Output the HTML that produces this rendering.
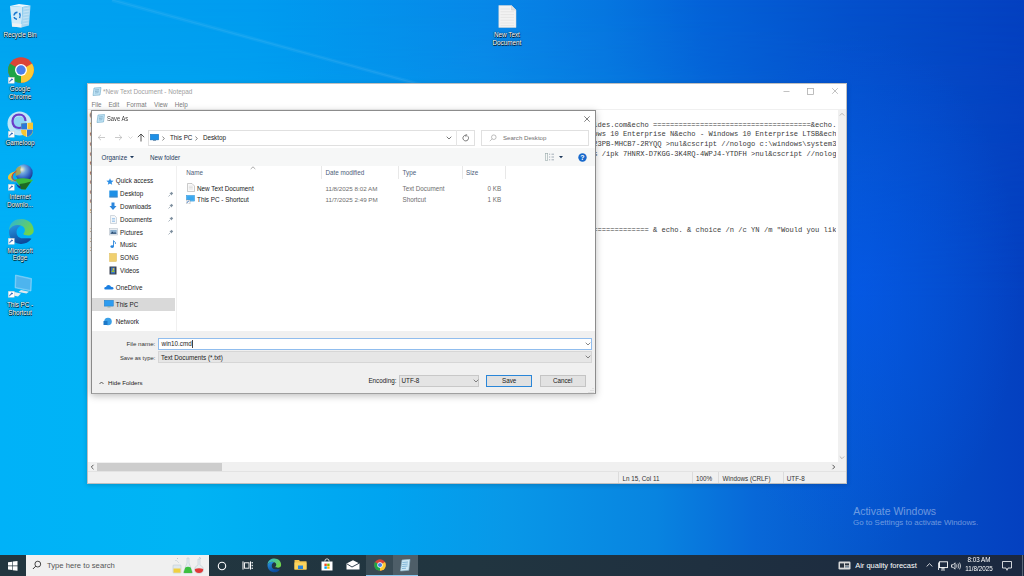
<!DOCTYPE html>
<html><head><meta charset="utf-8"><style>
*{margin:0;padding:0;box-sizing:border-box}
html,body{width:1024px;height:576px;overflow:hidden}
body{position:relative;font-family:"Liberation Sans",sans-serif;background:#0a80e0}
.a{position:absolute}
.t{position:absolute;white-space:nowrap;line-height:10px}
#bgTop{left:0;top:0;width:1024px;height:576px;background:linear-gradient(90deg,#00a4f0 0px,#009cf0 255px,#0888e8 485px,#0676e0 605px,#0462d8 705px,#0450cc 850px,#0440c0 1024px)}
#bgBot{left:0;top:0;width:1024px;height:576px;background:linear-gradient(90deg,#00b2f8 0px,#00b4f4 185px,#00a4f0 385px,#0898e8 505px,#0884e0 655px,#0868d8 755px,#0450c8 905px,#0440c0 1024px);-webkit-mask-image:linear-gradient(180deg,rgba(0,0,0,0) 0px,rgba(0,0,0,0.12) 65px,rgba(0,0,0,0.7) 155px,#000 300px);mask-image:linear-gradient(180deg,rgba(0,0,0,0) 0px,rgba(0,0,0,0.12) 65px,rgba(0,0,0,0.7) 155px,#000 300px)}
.dl{color:#fff;font-size:6.3px;text-align:center;width:44px;line-height:7.7px;text-shadow:0.6px 0.6px 0.4px rgba(0,0,0,0.9),-0.4px 0 0.4px rgba(0,0,0,0.5),0 0 1.5px rgba(0,0,0,0.8)}
.mono{font-family:"Liberation Mono",monospace;font-size:7.12px;line-height:9.54px;color:#3a3a3a;white-space:pre}
</style></head><body>
<div id="bgTop" class="a"></div><div id="bgBot" class="a"></div>
<div class="a" style="left:0px;top:0px;width:1024px;height:576px;background:radial-gradient(ellipse 160px 260px at 860px 290px, rgba(4,88,240,0.6), rgba(4,88,240,0))"></div>
<svg class="a" style="left:0px;top:0px" width="1024" height="200" viewBox="0 0 1024 200"><path d="M112 0 L520 112" stroke="#fff" stroke-opacity="0.05" stroke-width="4"/><path d="M112 0 L520 112" stroke="#fff" stroke-opacity="0.06" stroke-width="1.2"/></svg>
<div class="t dl" style="left:-2px;top:31px">Recycle Bin</div>
<div class="t dl" style="left:-2px;top:85px">Google<br>Chrome</div>
<div class="t dl" style="left:-2px;top:139px">Gameloop</div>
<div class="t dl" style="left:-2px;top:193px">Internet<br>Downlo...</div>
<div class="t dl" style="left:-2px;top:246.6px">Microsoft<br>Edge</div>
<div class="t dl" style="left:-2px;top:301px">This PC -<br>Shortcut</div>
<div class="t dl" style="left:484.9px;top:31.2px">New Text<br>Document</div>
<svg class="a" style="left:9px;top:3px" width="23" height="26" viewBox="0 0 23 26"><path d="M1 3 L13.5 4 L12.5 24.5 L3 23.5 Z" fill="#d2ebf8"/><path d="M13.5 4 L21.5 2.5 L20 22.5 L12.5 24.5 Z" fill="#a9d6f0"/><path d="M14.5 6 L20.5 5 M14.4 9 L20.3 8 M14.2 12 L20.1 11 M14 15 L19.9 14 M13.9 18 L19.7 17 M13.7 21 L19.5 20" stroke="#d8eef8" stroke-width="0.6"/><path d="M1 3 L10 1 L21.5 2.5 L13.5 4 Z" fill="#eef8fd"/><path d="M3 20 L12.7 21 L12.5 24.5 L3 23.5 Z" fill="#eef2f4"/><path d="M5 12.5 Q5.5 9.5 8.5 9.3 M10.5 10 Q12 12.5 10.5 15 M8 16.2 Q5.5 16 5.2 14" fill="none" stroke="#1a78d0" stroke-width="1.5"/></svg>
<svg class="a" style="left:7.5px;top:57.3px" width="26" height="26" viewBox="0 0 26 26"><circle cx="13" cy="13" r="12.8" fill="#db4437"/><path d="M13 13 L24.09 6.6 A12.8 12.8 0 0 1 13 25.8 Z" fill="#fcc934"/><path d="M13 13 L13 25.8 A12.8 12.8 0 0 1 1.91 6.6 Z" fill="#1ea446"/><circle cx="13" cy="13" r="6" fill="#fff"/><circle cx="13" cy="13" r="4.7" fill="#4a80ea"/></svg>
<svg class="a" style="left:7.5px;top:77px" width="7" height="7" viewBox="0 0 7 7"><rect x="0.3" y="0.3" width="6" height="6" fill="#fff" stroke="#c8c8c8" stroke-width="0.4"/><path d="M1.6 5.2 Q1.8 2.6 4.4 2.4" fill="none" stroke="#1c58b0" stroke-width="0.9"/><path d="M3.4 1.3 L5 2.4 L3.6 3.7 Z" fill="#1c58b0"/></svg>
<svg class="a" style="left:7px;top:111px" width="27" height="26" viewBox="0 0 27 26"><circle cx="12.5" cy="12.5" r="12" fill="#bfe6f8"/><circle cx="12.5" cy="12.5" r="7" fill="#8fd4f4"/><path d="M18.5 10 Q18 3.5 12 3.5 Q6 3.8 5.5 10 Q5.5 16.5 12 17 Q15.5 17 17.5 14" fill="none" stroke="#6a3cc8" stroke-width="2.2"/><path d="M14 12.5 L26 11.5 V19 Q26 24.5 20 26 Q14 24.5 14 19 Z" fill="#f6c530"/><path d="M20 11.9 V26 M14 18.5 H26" stroke="#fff" stroke-width="0.8"/><path d="M14.2 12.4 L20 12 V18.5 H14.2 Z M20 18.5 H25.9 Q25.7 24.3 20 25.9 Z" fill="#2a78d8"/></svg>
<svg class="a" style="left:7.5px;top:131px" width="7" height="7" viewBox="0 0 7 7"><rect x="0.3" y="0.3" width="6" height="6" fill="#fff" stroke="#c8c8c8" stroke-width="0.4"/><path d="M1.6 5.2 Q1.8 2.6 4.4 2.4" fill="none" stroke="#1c58b0" stroke-width="0.9"/><path d="M3.4 1.3 L5 2.4 L3.6 3.7 Z" fill="#1c58b0"/></svg>
<svg class="a" style="left:4px;top:162px" width="32" height="32" viewBox="0 0 32 32"><defs><radialGradient id="ig" cx="0.38" cy="0.3" r="0.75"><stop offset="0" stop-color="#f6f0c8"/><stop offset="0.3" stop-color="#70a8e0"/><stop offset="0.7" stop-color="#2a5cc0"/><stop offset="1" stop-color="#18307a"/></radialGradient></defs><circle cx="20" cy="11" r="8.7" fill="url(#ig)"/><path d="M12 7 Q14 4 17 4.5 Q15.5 8 17 11 Q14 14 11.5 14 Q11 10 12 7 Z" fill="#a8a848" opacity="0.85"/><path d="M12.5 9 Q3 11 4 16.5 Q6 20.5 13 20 Q7.5 18.5 7.3 15.5 Q7.3 11.5 12.5 9 Z" fill="#f2c232"/><path d="M12.5 9 Q8 11.5 8 15 Q8.5 18 12 19" fill="none" stroke="#e23a1a" stroke-width="1"/><path d="M5 18 Q10 21 16 20" fill="none" stroke="#3aa0d8" stroke-width="1"/><path d="M11 17.5 Q20 15 29 18 Q26 21 21.5 27.5 L16.5 27 Q15 22 11 17.5 Z" fill="#3cbc3c"/><path d="M15.5 22 Q20 21.5 27 19.5 L21.5 27.5 L17 27.3 Z" fill="#1d6a24"/><path d="M11.5 21 Q14 24 17 24.5 L16.5 27 Q13 25 11.5 21 Z" fill="#1a3a8a"/></svg>
<svg class="a" style="left:7.5px;top:184px" width="7" height="7" viewBox="0 0 7 7"><rect x="0.3" y="0.3" width="6" height="6" fill="#fff" stroke="#c8c8c8" stroke-width="0.4"/><path d="M1.6 5.2 Q1.8 2.6 4.4 2.4" fill="none" stroke="#1c58b0" stroke-width="0.9"/><path d="M3.4 1.3 L5 2.4 L3.6 3.7 Z" fill="#1c58b0"/></svg>
<svg class="a" style="left:7.5px;top:218px" width="27" height="27" viewBox="0 0 27 27"><defs><linearGradient id="dg1" x1="0" y1="0" x2="0.4" y2="1"><stop offset="0" stop-color="#2a9ae6"/><stop offset="1" stop-color="#0c4a9c"/></linearGradient><linearGradient id="dg2" x1="0" y1="0" x2="1" y2="0.6"><stop offset="0" stop-color="#2ab4dc"/><stop offset="1" stop-color="#70d44a"/></linearGradient></defs><path d="M1 12 C3 7.5 9 5.5 13.5 7.8 C10.5 8.3 8.5 11 8.6 14.5 C8.7 18 11 20.2 14.5 20.3 C18 20.4 21.5 20 23.5 20.8 C20.5 25 15.5 26.5 11.5 25.8 C4.5 25 0.5 19 1 12 Z" fill="url(#dg1)"/><path d="M1 12 C1.5 4 7.5 1 13.5 1 C20.5 1 25.7 6 25.7 12.5 C25.7 16 23 17.5 20 17.5 C17.5 17.5 15.5 16.8 15.2 15.8 C17.3 14.5 17.8 10 14.5 8.2 C9.5 5.5 3.5 7.5 1 12 Z" fill="url(#dg2)"/></svg>
<svg class="a" style="left:7.5px;top:237.5px" width="7" height="7" viewBox="0 0 7 7"><rect x="0.3" y="0.3" width="6" height="6" fill="#fff" stroke="#c8c8c8" stroke-width="0.4"/><path d="M1.6 5.2 Q1.8 2.6 4.4 2.4" fill="none" stroke="#1c58b0" stroke-width="0.9"/><path d="M3.4 1.3 L5 2.4 L3.6 3.7 Z" fill="#1c58b0"/></svg>
<svg class="a" style="left:8px;top:274px" width="25" height="25" viewBox="0 0 25 25"><path d="M7.5 1 L23.5 4.5 L23 17 L7 13.8 Z" fill="#6cc4f4" stroke="#a8def8" stroke-width="0.5"/><path d="M8.5 2.3 L22.5 5.5 L22 15.8 L8 13 Z" fill="#4db4ee"/><path d="M13 16 L21 17.8 L18.5 19.5 L10.5 18 Z" fill="#dfe8ee"/><path d="M4 17.5 L13 19.5 L10 22.5 L0.5 20.5 Z" fill="#e8eef2"/></svg>
<svg class="a" style="left:7.5px;top:290.5px" width="7" height="7" viewBox="0 0 7 7"><rect x="0.3" y="0.3" width="6" height="6" fill="#fff" stroke="#c8c8c8" stroke-width="0.4"/><path d="M1.6 5.2 Q1.8 2.6 4.4 2.4" fill="none" stroke="#1c58b0" stroke-width="0.9"/><path d="M3.4 1.3 L5 2.4 L3.6 3.7 Z" fill="#1c58b0"/></svg>
<svg class="a" style="left:497.5px;top:5px" width="19" height="23" viewBox="0 0 19 23"><path d="M0.8 0.5 H13.5 L18 5 V22.5 H0.8 Z" fill="#f2f2f2" stroke="#d8d8d8" stroke-width="0.5"/><path d="M13.5 0.5 V5 H18" fill="#e0e0e0" stroke="#c8c8c8" stroke-width="0.5"/><path d="M2.5 4 H12 M2.5 6.8 H16 M2.5 9.6 H16 M2.5 12.4 H16 M2.5 15.2 H16 M2.5 18 H16 M2.5 20.6 H16" stroke="#d8d8d8" stroke-width="0.5"/></svg>
<div class="a" style="left:87px;top:83px;width:760px;height:401px;background:#fff;border:1px solid rgba(0,0,0,0.25);box-shadow:0 1px 5px rgba(0,0,0,0.18)"></div>
<svg class="a" style="left:92px;top:87px" width="10" height="9" viewBox="0 0 10 9"><path d="M2 1 L9 0.5 L8 8 L1 8.5 Z" fill="#bfe3f5" stroke="#6fa9c8" stroke-width="0.6"/><path d="M3 3 L7 2.6 M3 4.5 L7 4.1 M3 6 L6.5 5.7" stroke="#5a8fb0" stroke-width="0.5"/></svg>
<div class="t" style="left:103px;top:86.8px;font-size:6.4px;color:#a0a0a0;">*New Text Document - Notepad</div>
<svg class="a" style="left:782.5px;top:90px" width="7" height="3" viewBox="0 0 7 3"><path d="M0.5 1.5 H6.5" stroke="#a8a8a8" stroke-width="0.7"/></svg>
<svg class="a" style="left:806.5px;top:87.5px" width="7" height="7" viewBox="0 0 7 7"><rect x="0.6" y="0.6" width="5.8" height="5.8" fill="none" stroke="#a8a8a8" stroke-width="0.75"/></svg>
<svg class="a" style="left:831px;top:87px" width="8" height="8" viewBox="0 0 8 8"><path d="M1.2 1.2 L6.8 6.8 M6.8 1.2 L1.2 6.8" stroke="#a8a8a8" stroke-width="0.7"/></svg>
<div class="t" style="left:91.4px;top:99.6px;font-size:6.3px;color:#7a7a7a;">File</div>
<div class="t" style="left:108.4px;top:99.6px;font-size:6.3px;color:#7a7a7a;">Edit</div>
<div class="t" style="left:126.5px;top:99.6px;font-size:6.3px;color:#7a7a7a;">Format</div>
<div class="t" style="left:154.1px;top:99.6px;font-size:6.3px;color:#7a7a7a;">View</div>
<div class="t" style="left:174.7px;top:99.6px;font-size:6.3px;color:#7a7a7a;">Help</div>
<div class="a" style="left:88px;top:109px;width:758px;height:1px;background:#f0f0f0"></div>
<div class="a" style="left:88px;top:110px;width:748.4px;height:352px;overflow:hidden">
<div class="a mono" style="left:1.8px;top:1.4px">@echo off
title Activate Windows 10 ALL versions for FREE!&amp;cls&amp;echo ============================================================ides.com&amp;echo =====================================&amp;echo.&amp;echo #Supported products:
echo #Supported products:&amp;echo - Windows 10 Home&amp;echo - Windows 10 Professional&amp;echo - Windows 10 Enterprise&amp;echo - Wiows 10 Enterprise N&amp;echo - Windows 10 Enterprise LTSB&amp;echo - Windows 10 Education
cscript //nologo c:\windows\system32\slmgr.vbs /ipk W269N-WFGWX-YVC9B-4J6C9-T83GX &gt;nul&amp;cscript //nologo c:\windows\sys23PB-MHCB7-2RYQQ &gt;nul&amp;cscript //nologo c:\windows\system32\slmgr.vbs
cscript //nologo c:\windows\system32\slmgr.vbs /ipk MH37W-N47XK-V7XM9-C7227-GCQG9 &gt;nul&amp;cscript //nologo c:\windows\syss /ipk 7HNRX-D7KGG-3K4RQ-4WPJ4-YTDFH &gt;nul&amp;cscript //nologo c:\windows
echo ============================================================================
echo Activating your Windows...
cscript //nologo c:\windows\system32\slmgr.vbs /ckms &gt;nul
cscript //nologo c:\windows\system32\slmgr.vbs /upk &gt;nul
cscript //nologo c:\windows\system32\slmgr.vbs /cpky &gt;nul
set i=1
:server
if %i%==1 set KMS_Sev=kms7.MSGuides.com&amp;echo.&amp;echo #Please consider supporting this project: donate.msguides.com&amp;echo ============= &amp; echo. &amp; choice /n /c YN /m &quot;Would you like to visit my blog [Y,N]?&quot;
if %i%==2 set KMS_Sev=kms8.MSGuides.com
if %i%==3 set KMS</div>
</div>
<div class="a" style="left:838px;top:110px;width:8px;height:352px;background:#f0f0f0"></div>
<svg class="a" style="left:839px;top:112px" width="6" height="5" viewBox="0 0 6 5"><path d="M0.8 3.5 L3 1.3 L5.2 3.5" fill="none" stroke="#a8a8a8" stroke-width="0.8"/></svg>
<svg class="a" style="left:839px;top:455px" width="6" height="5" viewBox="0 0 6 5"><path d="M0.8 1.5 L3 3.7 L5.2 1.5" fill="none" stroke="#a8a8a8" stroke-width="0.8"/></svg>
<div class="a" style="left:88px;top:462px;width:750px;height:9px;background:#f0f0f0"></div>
<div class="a" style="left:838px;top:462px;width:8px;height:9px;background:#f0f0f0"></div>
<div class="a" style="left:97px;top:463px;width:125px;height:7.5px;background:#cdcdcd"></div>
<svg class="a" style="left:89.5px;top:464px" width="5" height="6" viewBox="0 0 5 6"><path d="M3.5 0.8 L1.3 3 L3.5 5.2" fill="none" stroke="#555" stroke-width="1"/></svg>
<svg class="a" style="left:831px;top:464px" width="5" height="6" viewBox="0 0 5 6"><path d="M1.5 0.8 L3.7 3 L1.5 5.2" fill="none" stroke="#555" stroke-width="1"/></svg>
<div class="a" style="left:88px;top:471px;width:758px;height:12px;background:#f0f0f0;border-top:1px solid #e3e3e3"></div>
<div class="a" style="left:617.5px;top:472px;width:1px;height:11px;background:#dcdcdc"></div>
<div class="a" style="left:692px;top:472px;width:1px;height:11px;background:#dcdcdc"></div>
<div class="a" style="left:718px;top:472px;width:1px;height:11px;background:#dcdcdc"></div>
<div class="a" style="left:782.5px;top:472px;width:1px;height:11px;background:#dcdcdc"></div>
<div class="t" style="left:622.5px;top:473.5px;font-size:6.3px;color:#333;">Ln 15, Col 11</div>
<div class="t" style="left:696px;top:473.5px;font-size:6.3px;color:#333;">100%</div>
<div class="t" style="left:722.6px;top:473.5px;font-size:6.3px;color:#333;">Windows (CRLF)</div>
<div class="t" style="left:786.8px;top:473.5px;font-size:6.3px;color:#333;">UTF-8</div>
<div class="a" style="left:91px;top:110px;width:505px;height:284px;background:#fff;border:1px solid #8c8c8c;border-left-color:#8a8a8a;border-bottom-color:#a0a0a0;box-shadow:0 2px 7px rgba(0,0,0,0.25)"></div>
<svg class="a" style="left:96px;top:114px" width="9" height="9" viewBox="0 0 9 9"><path d="M2 1 L8.5 0.5 L7.5 8 L1 8.5 Z" fill="#bfe3f5" stroke="#6fa9c8" stroke-width="0.6"/><path d="M3 3 L6.8 2.6 M3 4.5 L6.8 4.1 M3 6 L6.3 5.7" stroke="#5a8fb0" stroke-width="0.5"/></svg>
<div class="t" style="left:107px;top:113.8px;font-size:6.4px;color:#3a3a3a;transform:scaleX(0.9);transform-origin:0 0">Save As</div>
<svg class="a" style="left:584px;top:115.5px" width="6" height="6" viewBox="0 0 6 6"><path d="M0.3 0.3 L5.7 5.7 M5.7 0.3 L0.3 5.7" stroke="#555" stroke-width="0.75"/></svg>
<svg class="a" style="left:97px;top:134px" width="9" height="7" viewBox="0 0 9 7"><path d="M1 3.5 H8 M4 0.8 L1.2 3.5 L4 6.2" fill="none" stroke="#bdbdbd" stroke-width="0.8"/></svg>
<svg class="a" style="left:113.5px;top:134px" width="9" height="7" viewBox="0 0 9 7"><path d="M8 3.5 H1 M5 0.8 L7.8 3.5 L5 6.2" fill="none" stroke="#bdbdbd" stroke-width="0.8"/></svg>
<svg class="a" style="left:128px;top:136px" width="5" height="3" viewBox="0 0 5 3"><path d="M0.5 0.5 L2.5 2.5 L4.5 0.5" fill="none" stroke="#c8c8c8" stroke-width="0.7"/></svg>
<svg class="a" style="left:137px;top:133px" width="8" height="9" viewBox="0 0 8 9"><path d="M4 8.5 V1 M0.8 4.2 L4 1 L7.2 4.2" fill="none" stroke="#444" stroke-width="0.9"/></svg>
<div class="a" style="left:148px;top:129.5px;width:327px;height:16.5px;background:#fff;border:1px solid #e0e0e0"></div>
<div class="a" style="left:456px;top:130px;width:1px;height:15.5px;background:#e5e5e5"></div>
<svg class="a" style="left:149.5px;top:133.5px" width="9" height="7" viewBox="0 0 9 7"><rect x="0.3" y="0.3" width="8.4" height="5.6" fill="#1e90e6" stroke="#0d6fc0" stroke-width="0.5"/><rect x="3" y="6" width="3" height="1" fill="#7a9ab8"/></svg>
<svg class="a" style="left:161.5px;top:135.5px" width="3" height="5" viewBox="0 0 3 5"><path d="M0.5 0.5 L2.3 2.5 L0.5 4.5" fill="none" stroke="#555" stroke-width="0.7"/></svg>
<div class="t" style="left:170px;top:132.6px;font-size:6.3px;color:#1a1a1a;">This PC</div>
<svg class="a" style="left:195px;top:135.5px" width="3" height="5" viewBox="0 0 3 5"><path d="M0.5 0.5 L2.3 2.5 L0.5 4.5" fill="none" stroke="#555" stroke-width="0.7"/></svg>
<div class="t" style="left:202.9px;top:132.6px;font-size:6.3px;color:#1a1a1a;">Desktop</div>
<svg class="a" style="left:445.5px;top:136px" width="6" height="4" viewBox="0 0 6 4"><path d="M0.7 0.7 L3 3 L5.3 0.7" fill="none" stroke="#555" stroke-width="0.8"/></svg>
<svg class="a" style="left:461.5px;top:133.5px" width="8" height="8" viewBox="0 0 8 8"><path d="M5.8 2.2 A2.8 2.8 0 1 1 4 1.3" fill="none" stroke="#555" stroke-width="0.8"/><path d="M3.5 0 L5.2 1.3 L3.5 2.6" fill="none" stroke="#555" stroke-width="0.7"/></svg>
<div class="a" style="left:481px;top:129.5px;width:108px;height:16px;background:#fff;border:1px solid #e0e0e0"></div>
<svg class="a" style="left:488.5px;top:133.5px" width="8" height="8" viewBox="0 0 8 8"><circle cx="4.8" cy="3.2" r="2.3" fill="none" stroke="#a0a0a0" stroke-width="0.7"/><path d="M3.2 4.8 L0.8 7.2" stroke="#a8a8a8" stroke-width="0.7"/></svg>
<div class="t" style="left:503px;top:132.8px;font-size:6.1px;color:#707070;">Search Desktop</div>
<div class="a" style="left:92px;top:148px;width:503px;height:18px;background:#f6f7f7"></div>
<div class="t" style="left:101.6px;top:152.8px;font-size:6.3px;color:#1e395b;">Organize</div>
<svg class="a" style="left:129.5px;top:156px" width="4" height="3" viewBox="0 0 4 3"><path d="M0 0 H4 L2 2.2 Z" fill="#1e395b"/></svg>
<div class="t" style="left:150px;top:152.8px;font-size:6.3px;color:#1e395b;">New folder</div>
<svg class="a" style="left:544.5px;top:153px" width="10" height="8" viewBox="0 0 10 8"><rect x="0.5" y="0.5" width="2.2" height="7" fill="none" stroke="#9aa" stroke-width="0.6"/><path d="M4 1.2 H5.2 M6.5 1.2 H9 M4 4 H5.2 M6.5 4 H9 M4 6.8 H5.2 M6.5 6.8 H9" stroke="#9aa5b0" stroke-width="0.9"/></svg>
<svg class="a" style="left:558.5px;top:156px" width="4" height="3" viewBox="0 0 4 3"><path d="M0 0 H4 L2 2.2 Z" fill="#1e395b"/></svg>
<svg class="a" style="left:578px;top:153px" width="9" height="9" viewBox="0 0 9 9"><circle cx="4.5" cy="4.5" r="4.2" fill="#1869cc"/><text x="4.5" y="7.2" font-size="7" font-family="Liberation Sans" font-weight="bold" text-anchor="middle" fill="#fff">?</text></svg>
<div class="a" style="left:176px;top:166px;width:1px;height:165px;background:#f0f0f0"></div>
<svg class="a" style="left:105.5px;top:177.5px" width="8" height="7" viewBox="0 0 8 7"><path d="M4 0.3 L5 2.6 L7.6 2.8 L5.6 4.4 L6.2 6.8 L4 5.5 L1.8 6.8 L2.4 4.4 L0.4 2.8 L3 2.6 Z" fill="#2b8ee6"/></svg>
<div class="t" style="left:115.8px;top:176.4px;font-size:6.3px;color:#1a1a1a;">Quick access</div>
<div class="t" style="left:120.1px;top:189.0px;font-size:6.3px;color:#1a1a1a;">Desktop</div>
<svg class="a" style="left:167.5px;top:190.6px" width="6" height="6" viewBox="0 0 6 6"><path d="M0.5 5.5 L2.3 3.7" stroke="#8796a4" stroke-width="0.7"/><path d="M3.6 0.8 L5.2 2.4 L4.2 3.2 L3.9 4.6 L1.4 2.1 L2.8 1.8 Z" fill="#7d8e9e"/></svg>
<div class="t" style="left:120.1px;top:201.79999999999998px;font-size:6.3px;color:#1a1a1a;">Downloads</div>
<svg class="a" style="left:167.5px;top:203.39999999999998px" width="6" height="6" viewBox="0 0 6 6"><path d="M0.5 5.5 L2.3 3.7" stroke="#8796a4" stroke-width="0.7"/><path d="M3.6 0.8 L5.2 2.4 L4.2 3.2 L3.9 4.6 L1.4 2.1 L2.8 1.8 Z" fill="#7d8e9e"/></svg>
<div class="t" style="left:120.1px;top:214.79999999999998px;font-size:6.3px;color:#1a1a1a;">Documents</div>
<svg class="a" style="left:167.5px;top:216.39999999999998px" width="6" height="6" viewBox="0 0 6 6"><path d="M0.5 5.5 L2.3 3.7" stroke="#8796a4" stroke-width="0.7"/><path d="M3.6 0.8 L5.2 2.4 L4.2 3.2 L3.9 4.6 L1.4 2.1 L2.8 1.8 Z" fill="#7d8e9e"/></svg>
<div class="t" style="left:120.1px;top:227.7px;font-size:6.3px;color:#1a1a1a;">Pictures</div>
<svg class="a" style="left:167.5px;top:229.29999999999998px" width="6" height="6" viewBox="0 0 6 6"><path d="M0.5 5.5 L2.3 3.7" stroke="#8796a4" stroke-width="0.7"/><path d="M3.6 0.8 L5.2 2.4 L4.2 3.2 L3.9 4.6 L1.4 2.1 L2.8 1.8 Z" fill="#7d8e9e"/></svg>
<div class="t" style="left:120.1px;top:240.29999999999998px;font-size:6.3px;color:#1a1a1a;">Music</div>
<div class="t" style="left:120.1px;top:252.99999999999997px;font-size:6.3px;color:#1a1a1a;">SONG</div>
<div class="t" style="left:120.1px;top:266.0px;font-size:6.3px;color:#1a1a1a;">Videos</div>
<svg class="a" style="left:108.5px;top:189.5px" width="9" height="8" viewBox="0 0 9 8"><rect x="0.3" y="0.5" width="8.4" height="6" fill="#1e90e6"/><rect x="0.3" y="6.3" width="8.4" height="1.2" fill="#0f70c0"/></svg>
<svg class="a" style="left:109px;top:201.5px" width="8" height="9" viewBox="0 0 8 9"><path d="M2.5 0.5 H5.5 V4 H7.5 L4 8 L0.5 4 H2.5 Z" fill="#2a86dc"/></svg>
<svg class="a" style="left:109.5px;top:214.5px" width="7" height="9" viewBox="0 0 7 9"><path d="M0.5 0.5 H4.5 L6.5 2.5 V8.5 H0.5 Z" fill="#f4f7fa" stroke="#a8b4c0" stroke-width="0.5"/><path d="M2 3.5 H5 M2 5 H5 M2 6.5 H5" stroke="#5ea0e0" stroke-width="0.5"/></svg>
<svg class="a" style="left:108.5px;top:228px" width="9" height="8" viewBox="0 0 9 8"><rect x="0.3" y="0.5" width="8.4" height="6.5" fill="#e8edf2" stroke="#b0bac4" stroke-width="0.5"/><rect x="1.3" y="2" width="6.4" height="3.8" fill="#8ab0d0"/><path d="M1.3 5.8 L3.5 3.5 L5 5 L6 4 L7.7 5.8 Z" fill="#2a4a70"/></svg>
<svg class="a" style="left:109.5px;top:240px" width="7" height="9" viewBox="0 0 7 9"><path d="M3.5 0.5 V6.3" stroke="#2a86dc" stroke-width="0.9"/><ellipse cx="2.2" cy="6.6" rx="1.8" ry="1.4" fill="#2a86dc"/><path d="M3.5 0.8 Q6 2 5.5 4" fill="none" stroke="#2a86dc" stroke-width="0.8"/></svg>
<svg class="a" style="left:108.5px;top:253px" width="8" height="9" viewBox="0 0 8 9"><rect x="0.5" y="0.5" width="7" height="8" fill="#f0d070" stroke="#d8b040" stroke-width="0.4"/></svg>
<svg class="a" style="left:108.5px;top:266px" width="8" height="9" viewBox="0 0 8 9"><rect x="0.5" y="0.5" width="7" height="8" fill="#3a4050"/><rect x="2" y="1.5" width="4" height="6" fill="#3a78c0"/><path d="M2.2 6 L4 3.5 L5.8 6 Z" fill="#a0c030"/><circle cx="4.5" cy="3" r="0.9" fill="#e8c040"/></svg>
<svg class="a" style="left:103.5px;top:284px" width="10" height="6" viewBox="0 0 10 6"><path d="M1.5 5.5 Q0 5.5 0.3 4 Q0.6 2.8 2 3 Q2.5 1 4.5 1 Q6.5 1 7 2.8 Q9.6 2.8 9.6 4.3 Q9.6 5.5 8 5.5 Z" fill="#1a7ee0"/></svg>
<div class="a" style="left:92px;top:298px;width:83px;height:13px;background:#d9d9d9"></div>
<svg class="a" style="left:103.5px;top:300px" width="10" height="8" viewBox="0 0 10 8"><rect x="0.3" y="0.3" width="9" height="5.8" fill="#2d9cf0" stroke="#1b7cc8" stroke-width="0.5"/><rect x="3.5" y="6.2" width="3" height="1.2" fill="#8aa"/></svg>
<div class="t" style="left:115.8px;top:300px;font-size:6.3px;color:#1a1a1a;">This PC</div>
<div class="t" style="left:115.8px;top:282.7px;font-size:6.3px;color:#1a1a1a;">OneDrive</div>
<svg class="a" style="left:103px;top:317px" width="10" height="9" viewBox="0 0 10 9"><circle cx="5" cy="4.5" r="3.8" fill="#3aa0e8"/><rect x="0.5" y="4" width="4" height="4" fill="#1c78c8"/></svg>
<div class="t" style="left:115.8px;top:316.9px;font-size:6.3px;color:#1a1a1a;">Network</div>
<div class="t" style="left:186.2px;top:167.6px;font-size:6.3px;color:#4c607a;">Name</div>
<div class="t" style="left:325.4px;top:167.6px;font-size:6.3px;color:#4c607a;">Date modified</div>
<div class="t" style="left:402.5px;top:167.6px;font-size:6.3px;color:#4c607a;">Type</div>
<div class="t" style="left:466px;top:167.6px;font-size:6.3px;color:#4c607a;">Size</div>
<div class="a" style="left:321px;top:166px;width:1px;height:13px;background:#e8e8e8"></div>
<div class="a" style="left:397.5px;top:166px;width:1px;height:13px;background:#e8e8e8"></div>
<div class="a" style="left:462px;top:166px;width:1px;height:13px;background:#e8e8e8"></div>
<div class="a" style="left:505px;top:166px;width:1px;height:13px;background:#e8e8e8"></div>
<svg class="a" style="left:249.5px;top:166px" width="6" height="3.5" viewBox="0 0 6 3.5"><path d="M0.7 3 L3 0.8 L5.3 3" fill="none" stroke="#888" stroke-width="0.7"/></svg>
<svg class="a" style="left:186.5px;top:183px" width="8" height="9" viewBox="0 0 8 9"><path d="M0.5 0.5 H5 L7.5 3 V8.5 H0.5 Z" fill="#fafafa" stroke="#9a9a9a" stroke-width="0.5"/><path d="M1.8 3.2 H5.8 M1.8 4.6 H5.8 M1.8 6 H5.8" stroke="#c8c8c8" stroke-width="0.5"/></svg>
<div class="t" style="left:197px;top:183.8px;font-size:6.35px;color:#1a1a1a;">New Text Document</div>
<svg class="a" style="left:186px;top:195px" width="9" height="9" viewBox="0 0 9 9"><rect x="0.3" y="0.3" width="8.4" height="5.8" fill="#5ab8f4" stroke="#3a98d8" stroke-width="0.5"/><rect x="1.2" y="1.2" width="6.6" height="4" fill="#3aa8f0"/><rect x="0" y="5" width="4" height="4" fill="#fff" stroke="#888" stroke-width="0.4"/><path d="M1 8 Q1.3 6 3.2 6" fill="none" stroke="#1b5fb0" stroke-width="0.7"/></svg>
<div class="t" style="left:197px;top:195.3px;font-size:6.35px;color:#1a1a1a;">This PC - Shortcut</div>
<div class="t" style="left:325.4px;top:183.8px;font-size:6.25px;color:#6d6d6d;">11/8/2025 8:02 AM</div>
<div class="t" style="left:325.4px;top:195.3px;font-size:6.25px;color:#6d6d6d;">11/7/2025 2:49 PM</div>
<div class="t" style="left:402.5px;top:183.8px;font-size:6.3px;color:#6d6d6d;">Text Document</div>
<div class="t" style="left:402.5px;top:195.3px;font-size:6.3px;color:#6d6d6d;">Shortcut</div>
<div class="t" style="left:460px;top:183.8px;width:41.2px;text-align:right;font-size:6.3px;color:#6d6d6d">0 KB</div>
<div class="t" style="left:460px;top:195.3px;width:41.2px;text-align:right;font-size:6.3px;color:#6d6d6d">1 KB</div>
<div class="a" style="left:92px;top:331px;width:503px;height:62.2px;background:#f0f0f0"></div>
<div class="t" style="left:100px;top:339.2px;width:55.3px;text-align:right;font-size:6.2px;color:#333">File name:</div>
<div class="t" style="left:100px;top:352.8px;width:55.3px;text-align:right;font-size:5.85px;color:#333">Save as type:</div>
<div class="a" style="left:158.3px;top:337.5px;width:434.2px;height:12.2px;background:#fff;border:1px solid #90bdee"></div>
<div class="t" style="left:161.6px;top:339.2px;font-size:6.3px;color:#1a1a1a;">win10.cmd</div>
<div class="a" style="left:192px;top:340px;width:0.7px;height:8px;background:#444"></div>
<svg class="a" style="left:584.5px;top:341.5px" width="6" height="4" viewBox="0 0 6 4"><path d="M0.7 0.7 L3 3 L5.3 0.7" fill="none" stroke="#555" stroke-width="0.7"/></svg>
<div class="a" style="left:158.3px;top:351px;width:434.2px;height:12.2px;background:#e6e6e6;border:1px solid #d6d6d6"></div>
<div class="t" style="left:161px;top:352.8px;font-size:6.3px;color:#1a1a1a;">Text Documents (*.txt)</div>
<svg class="a" style="left:584.5px;top:355px" width="6" height="4" viewBox="0 0 6 4"><path d="M0.7 0.7 L3 3 L5.3 0.7" fill="none" stroke="#555" stroke-width="0.7"/></svg>
<svg class="a" style="left:98.5px;top:381px" width="5" height="3.5" viewBox="0 0 5 3.5"><path d="M0.5 3 L2.5 1 L4.5 3" fill="none" stroke="#333" stroke-width="0.8"/></svg>
<div class="t" style="left:108px;top:377.8px;font-size:6.1px;color:#1a1a1a;">Hide Folders</div>
<div class="t" style="left:368.4px;top:375.5px;font-size:6.3px;color:#1a1a1a;">Encoding:</div>
<div class="a" style="left:398.9px;top:374.6px;width:80.5px;height:12.2px;background:#e4e4e4;border:1px solid #c8c8c8"></div>
<div class="t" style="left:401.5px;top:375.5px;font-size:6.3px;color:#1a1a1a;">UTF-8</div>
<svg class="a" style="left:472.5px;top:378.5px" width="6" height="4" viewBox="0 0 6 4"><path d="M0.7 0.7 L3 3 L5.3 0.7" fill="none" stroke="#555" stroke-width="0.7"/></svg>
<div class="a" style="left:486px;top:374.6px;width:46.3px;height:12.4px;background:#e1e1e1;border:1px solid #2a86d8"></div>
<div class="t" style="left:486px;top:375.6px;width:46.3px;text-align:center;font-size:6.3px;color:#1a1a1a">Save</div>
<div class="a" style="left:539.5px;top:374.6px;width:46.4px;height:12.4px;background:#e2e2e2;border:1px solid #c4c4c4"></div>
<div class="t" style="left:539.5px;top:375.6px;width:46.4px;text-align:center;font-size:6.3px;color:#1a1a1a">Cancel</div>
<svg class="a" style="left:588px;top:387px" width="6" height="6" viewBox="0 0 6 6"><path d="M5 1 V1.6 M3 3 V3.6 M5 3 V3.6 M1 5 V5.6 M3 5 V5.6 M5 5 V5.6" stroke="#aaa" stroke-width="0.8"/></svg>
<div class="a" style="left:0px;top:555px;width:1024px;height:21px;background:linear-gradient(90deg,#22363f 0px,#213540 475px,#1f3040 705px,#1b2840 1024px)"></div>
<svg class="a" style="left:8px;top:560.5px" width="10" height="10" viewBox="0 0 10 10"><path d="M0 1.3 L4.2 0.7 V4.6 H0 Z M4.8 0.6 L9.5 0 V4.6 H4.8 Z M0 5.2 H4.2 V9.1 L0 8.5 Z M4.8 5.2 H9.5 V9.8 L4.8 9.2 Z" fill="#fff"/></svg>
<div class="a" style="left:26px;top:555px;width:183px;height:21px;background:#f0f0f0"></div>
<svg class="a" style="left:31.5px;top:560px" width="10" height="10" viewBox="0 0 10 10"><circle cx="5.8" cy="4.1" r="2.9" fill="none" stroke="#333" stroke-width="0.9"/><path d="M3.8 6.1 L0.9 9" stroke="#333" stroke-width="1"/></svg>
<div class="t" style="left:47px;top:561px;font-size:7.68px;color:#555;">Type here to search</div>
<svg class="a" style="left:171.5px;top:557px" width="10" height="17" viewBox="0 0 10 17"><path d="M5 1 L6 2 M3.5 3 L4.5 4 M5.5 4.5 L6.5 5.5" stroke="#9ab" stroke-width="0.6"/><rect x="1" y="8" width="8" height="8" rx="0.8" fill="#dfe8ee" stroke="#b8c4cc" stroke-width="0.5"/><rect x="1.5" y="11.5" width="7" height="4.2" fill="#f0d040"/></svg>
<svg class="a" style="left:183px;top:557px" width="10" height="17" viewBox="0 0 10 17"><path d="M4 1 H6 V6 L9.5 15 Q9.8 16.3 8.5 16.3 H1.5 Q0.2 16.3 0.5 15 L4 6 Z" fill="#e4ecef" stroke="#b8c4cc" stroke-width="0.5"/><path d="M2.3 10.5 Q5 9 7.7 10.5 L9.3 15.2 Q9.4 16 8.5 16 H1.5 Q0.6 16 0.7 15.2 Z" fill="#3cc040"/></svg>
<svg class="a" style="left:194px;top:557px" width="10" height="17" viewBox="0 0 10 17"><path d="M5 0.5 L7 1.5" stroke="#9ab" stroke-width="0.6"/><path d="M4 2 H6 V8 Q9.5 9.5 9.5 12.5 Q9.5 16.3 5 16.3 Q0.5 16.3 0.5 12.5 Q0.5 9.5 4 8 Z" fill="#e4ecef" stroke="#b8c4cc" stroke-width="0.5"/><path d="M0.8 12 Q5 10.5 9.2 12 Q9.3 16 5 16 Q0.7 16 0.8 12 Z" fill="#e03838"/></svg>
<svg class="a" style="left:217px;top:560.5px" width="10" height="10" viewBox="0 0 10 10"><circle cx="5" cy="5" r="3.7" fill="none" stroke="#fff" stroke-width="1.1"/></svg>
<svg class="a" style="left:242px;top:561px" width="11" height="9" viewBox="0 0 11 9"><rect x="0.5" y="0.4" width="1" height="8.2" fill="#fff"/><rect x="2.5" y="1.8" width="4.5" height="5.4" fill="none" stroke="#fff" stroke-width="0.9"/><rect x="8" y="0.4" width="1" height="8.2" fill="#fff"/><rect x="9.6" y="1" width="1.2" height="1.4" fill="#fff"/><rect x="9.6" y="3.8" width="1.2" height="1.4" fill="#fff"/><rect x="9.6" y="6.6" width="1.2" height="1.4" fill="#fff"/></svg>
<svg class="a" style="left:266.5px;top:557.5px" width="15" height="15" viewBox="0 0 15 15"><defs><linearGradient id="eg1" x1="0" y1="0" x2="0.4" y2="1"><stop offset="0" stop-color="#2a9ae6"/><stop offset="1" stop-color="#0c4a9c"/></linearGradient><linearGradient id="eg2" x1="0" y1="0" x2="1" y2="0.6"><stop offset="0" stop-color="#2ab4dc"/><stop offset="1" stop-color="#70d44a"/></linearGradient></defs><g transform="scale(0.55)"><path d="M1 12 C3 7.5 9 5.5 13.5 7.8 C10.5 8.3 8.5 11 8.6 14.5 C8.7 18 11 20.2 14.5 20.3 C18 20.4 21.5 20 23.5 20.8 C20.5 25 15.5 26.5 11.5 25.8 C4.5 25 0.5 19 1 12 Z" fill="url(#eg1)"/><path d="M1 12 C1.5 4 7.5 1 13.5 1 C20.5 1 25.7 6 25.7 12.5 C25.7 16 23 17.5 20 17.5 C17.5 17.5 15.5 16.8 15.2 15.8 C17.3 14.5 17.8 10 14.5 8.2 C9.5 5.5 3.5 7.5 1 12 Z" fill="url(#eg2)"/></g></svg>
<svg class="a" style="left:294px;top:559px" width="13" height="11" viewBox="0 0 13 11"><path d="M0.5 1 H5 L6 2.2 H12.5 V10.5 H0.5 Z" fill="#f3c24a"/><rect x="0.5" y="3.5" width="12" height="7" fill="#fbd45e"/><rect x="4" y="6.5" width="5" height="3.5" fill="#2a86dc"/></svg>
<svg class="a" style="left:321px;top:558px" width="12" height="13" viewBox="0 0 12 13"><path d="M3.8 3.5 Q3.8 0.8 6 0.8 Q8.2 0.8 8.2 3.5" fill="none" stroke="#fff" stroke-width="0.8"/><rect x="0.5" y="3.5" width="11" height="9" fill="#fff"/><rect x="3.4" y="5.6" width="2.4" height="2.4" fill="#f25022"/><rect x="6.2" y="5.6" width="2.4" height="2.4" fill="#7fba00"/><rect x="3.4" y="8.4" width="2.4" height="2.4" fill="#00a4ef"/><rect x="6.2" y="8.4" width="2.4" height="2.4" fill="#ffb900"/></svg>
<svg class="a" style="left:346px;top:559.5px" width="14" height="10" viewBox="0 0 14 10"><path d="M0.5 3.5 L7 0.3 L13.5 3.5 V9.5 H0.5 Z" fill="#fff"/><path d="M0.8 3.8 L6 7 L13.2 3.2" fill="none" stroke="#1f3040" stroke-width="0.9"/></svg>
<div class="a" style="left:366px;top:555px;width:26.5px;height:21px;background:#384a54"></div>
<div class="a" style="left:366px;top:575px;width:26.5px;height:1px;background:#8ccaf2"></div>
<svg class="a" style="left:373.5px;top:558.8px" width="12" height="12" viewBox="0 0 12 12"><circle cx="6" cy="6" r="5.8" fill="#db4437"/><path d="M6 6 L11.02 3.1 A5.8 5.8 0 0 1 6 11.8 Z" fill="#fcc934"/><path d="M6 6 L6 11.8 A5.8 5.8 0 0 1 0.98 3.1 Z" fill="#1ea446"/><circle cx="6" cy="6" r="2.7" fill="#fff"/><circle cx="6" cy="6" r="2.1" fill="#4a80ea"/></svg>
<div class="a" style="left:392.5px;top:555px;width:25.5px;height:21px;background:#4e5e68"></div>
<svg class="a" style="left:399px;top:558.5px" width="12" height="13" viewBox="0 0 12 13"><path d="M3 1 L11 0.3 L9.8 11.3 L1.5 12 Z" fill="#cfeaf6" stroke="#8fb8cc" stroke-width="0.6"/><path d="M3.5 3.5 L9 3 M3.3 5.5 L8.8 5 M3.1 7.5 L8.5 7 M3 9.5 L7 9.2" stroke="#4a90c0" stroke-width="0.6"/></svg>
<div class="a" style="left:392.5px;top:575px;width:25.5px;height:1px;background:#8ccaf2"></div>
<svg class="a" style="left:838.3px;top:561px" width="13" height="9" viewBox="0 0 13 9"><rect x="0.5" y="0.5" width="12" height="8" rx="1.2" fill="#d8d8d8"/><rect x="2" y="2.4" width="4" height="4.2" fill="#2a3340"/><rect x="7" y="2.4" width="4" height="2" fill="#2a3340"/><rect x="7" y="5" width="4" height="1.6" fill="#7a8a9a"/></svg>
<div class="t" style="left:855.2px;top:561px;font-size:7.5px;color:#fff;">Air quality forecast</div>
<svg class="a" style="left:926px;top:562.5px" width="7" height="4" viewBox="0 0 7 4"><path d="M0.6 3.5 L3.5 0.7 L6.4 3.5" fill="none" stroke="#fff" stroke-width="0.8"/></svg>
<svg class="a" style="left:938px;top:561px" width="10" height="10" viewBox="0 0 10 10"><rect x="1.5" y="0.8" width="8" height="5.8" fill="none" stroke="#fff" stroke-width="0.9"/><path d="M0.5 1.5 V9 M3 7 H7 M5 6.6 V8.5 M3 9 H7" stroke="#fff" stroke-width="0.8"/></svg>
<svg class="a" style="left:950.5px;top:561.5px" width="10" height="8" viewBox="0 0 10 8"><path d="M0.5 2.8 H2 L4 0.8 V7.2 L2 5.2 H0.5 Z" fill="none" stroke="#fff" stroke-width="0.8"/><path d="M5.5 2.5 Q6.5 4 5.5 5.5 M7 1.5 Q8.8 4 7 6.5 M8.5 0.6 Q11 4 8.5 7.4" fill="none" stroke="#fff" stroke-width="0.7"/></svg>
<div class="t" style="left:959.5px;top:555px;width:38px;text-align:center;font-size:7.2px;color:#fff;transform:scaleX(0.87)">8:03 AM</div>
<div class="t" style="left:959.7px;top:564.3px;width:38px;text-align:center;font-size:7.2px;color:#fff;transform:scaleX(0.87)">11/8/2025</div>
<svg class="a" style="left:1001.5px;top:560.5px" width="10" height="10" viewBox="0 0 10 10"><path d="M0.5 0.5 H9.5 V7 H6 L5 9.3 L4 7 H0.5 Z" fill="none" stroke="#fff" stroke-width="0.8"/></svg>
<div class="a" style="left:1021.5px;top:555px;width:0.6px;height:21px;background:#5a6878"></div>
<div class="t" style="left:853.2px;top:505.8px;font-size:10.5px;color:rgba(255,255,255,0.42);">Activate Windows</div>
<div class="t" style="left:853px;top:518.2px;font-size:7.94px;color:rgba(255,255,255,0.42);">Go to Settings to activate Windows.</div>
</body></html>
